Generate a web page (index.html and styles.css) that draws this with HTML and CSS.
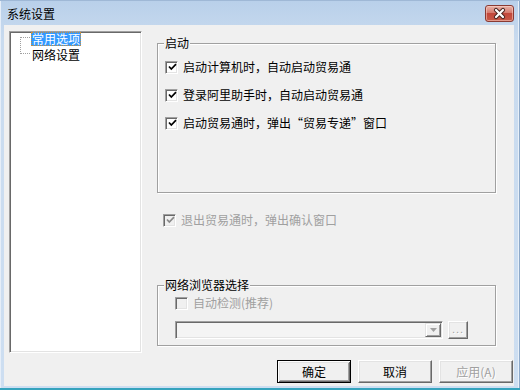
FILE: index.html
```html
<!DOCTYPE html>
<html lang="zh-CN">
<head>
<meta charset="utf-8">
<title>系统设置</title>
<link rel="stylesheet" href="styles.css">
</head>
<body>
<div class="window">
  <div class="titlebar">
    <span class="title">系统设置</span>
    <span class="close">
      <svg width="29" height="17" viewBox="0 0 29 17">
        <path d="M11 5 L18 12 M18 5 L11 12" stroke="#4a2420" stroke-width="4.2" stroke-linecap="round" fill="none"/>
        <path d="M11 5 L18 12 M18 5 L11 12" stroke="#ffffff" stroke-width="2.2" stroke-linecap="round" fill="none"/>
      </svg>
    </span>
  </div>
  <div class="client">
    <div class="main">
      <div class="tree">
        <div class="tree-body">
          <svg class="tree-lines" width="12" height="26" viewBox="0 0 12 26">
            <path d="M1.5 5 V22 M1.5 5.5 H12 M1.5 21.5 H12" stroke="#a0a0a0" stroke-width="1" stroke-dasharray="1 1" fill="none" shape-rendering="crispEdges"/>
          </svg>
          <div class="nodes">
            <span class="node selected">常用选项</span>
            <span class="node">网络设置</span>
          </div>
        </div>
      </div>
      <div class="panel">
        <div class="group group-start">
          <span class="group-label">启动</span>
          <div class="check-row"><span class="cb"><svg width="9" height="9" viewBox="0 0 9 9"><path d="M1 3.5 L3.3 6 L8 1.2" stroke="#000" stroke-width="1.7" fill="none"/></svg></span>启动计算机时，自动启动贸易通</div>
          <div class="check-row"><span class="cb"><svg width="9" height="9" viewBox="0 0 9 9"><path d="M1 3.5 L3.3 6 L8 1.2" stroke="#000" stroke-width="1.7" fill="none"/></svg></span>登录阿里助手时，自动启动贸易通</div>
          <div class="check-row"><span class="cb"><svg width="9" height="9" viewBox="0 0 9 9"><path d="M1 3.5 L3.3 6 L8 1.2" stroke="#000" stroke-width="1.7" fill="none"/></svg></span>启动贸易通时，弹出“贸易专递”窗口</div>
        </div>
        <div class="check-row disabled exit-row"><span class="cb"><svg width="9" height="9" viewBox="0 0 9 9"><path d="M1 3.5 L3.3 6 L8 1.2" stroke="#8a8a8a" stroke-width="1.7" fill="none"/></svg></span>退出贸易通时，弹出确认窗口</div>
        <div class="group group-browser">
          <span class="group-label">网络浏览器选择</span>
          <div class="check-row disabled"><span class="cb"></span>自动检测(推荐)</div>
          <div class="combo-row">
            <div class="combo">
              <span class="combo-value"></span>
              <span class="combo-arrow"><svg width="7" height="4" viewBox="0 0 7 4"><path d="M0 0 H7 L3.5 4 Z" fill="#a0a0a0"/></svg></span>
            </div>
            <span class="browse">...</span>
          </div>
        </div>
      </div>
    </div>
    <div class="buttons">
      <button class="btn default">确定</button>
      <button class="btn">取消</button>
      <button class="btn" disabled>应用(A)</button>
    </div>
  </div>
</div>
</body>
</html>
```
FILE: styles.css
```css
html, body {
  margin: 0;
  padding: 0;
  background: #ffffff;
}

body {
  font-family: "Noto Sans CJK SC", "Noto Sans", sans-serif;
  font-size: 12px;
  color: #000;
}

.window {
  width: 520px;
  height: 390px;
  box-sizing: border-box;
  display: flex;
  flex-direction: column;
  padding: 0 6px 2px 4px;
  background: linear-gradient(#b9d0ea, #c9dbef 40px, #cddef1);
  border-bottom: 2px solid #35a3bd;
  border-top: 1px solid #9fb8d6;
  box-shadow: inset 1px 0 0 #e6eef8, inset -1px 0 0 #8da9c9, inset -2px 0 0 #e8f0f9;
}

.titlebar {
  height: 24px;
  display: flex;
  align-items: flex-start;
  flex: none;
}

.title {
  margin: 6px 0 0 3px;
  line-height: 14px;
  color: #000;
}

.close {
  margin: 4px 0 0 auto;
  width: 29px;
  height: 17px;
  box-sizing: border-box;
  border: 1px solid #8a3a33;
  border-radius: 3px;
  background: linear-gradient(#e8b3a8, #d67a6e 45%, #c2473b 50%, #c85a48 100%);
  box-shadow: inset 0 0 0 1px rgba(255, 220, 210, 0.5);
  display: flex;
  align-items: center;
  justify-content: center;
}

.close svg {
  display: block;
  margin: -1px;
}

.client {
  flex: 1;
  background: #f0f0f0;
  display: flex;
  flex-direction: column;
}

.main {
  display: flex;
  padding: 6px 0 0 5px;
}

.tree {
  width: 133px;
  height: 322px;
  box-sizing: border-box;
  background: #fff;
  border: 1px solid;
  border-color: #a0a0a0 #fff #fff #a0a0a0;
  box-shadow: inset 1px 1px 0 #696969, inset -1px -1px 0 #e3e3e3;
  padding: 0 0 0 1px;
}

.tree-body {
  display: flex;
}

.tree-lines {
  display: block;
  margin: 0 0 0 8px;
  flex: none;
}

.nodes {
  display: flex;
  flex-direction: column;
  align-items: flex-start;
  gap: 2px;
}

.node {
  line-height: 14px;
  padding: 0 1px;
}

.node.selected {
  background: #3399ff;
  color: #fff;
  outline: 1px dotted #c8903c;
  outline-offset: -1px;
}

.panel {
  margin-left: 15px;
  width: 339px;
  display: flex;
  flex-direction: column;
}

.group {
  position: relative;
  box-sizing: border-box;
  border: 1px solid #a0a0a0;
  box-shadow: inset 1px 1px 0 #fff, 1px 1px 0 #fff;
  display: flex;
  flex-direction: column;
}

.group-label {
  position: absolute;
  top: -8px;
  left: 6px;
  padding: 0 1px;
  line-height: 14px;
  background: #f0f0f0;
}

.group-start {
  margin-top: 12px;
  height: 150px;
  padding: 16px 0 0 7px;
  gap: 14px;
}

.check-row {
  display: flex;
  align-items: center;
  height: 14px;
  line-height: 14px;
  white-space: nowrap;
}

.cb {
  width: 13px;
  height: 13px;
  box-sizing: border-box;
  flex: none;
  margin-right: 5px;
  background: #fff;
  border: 1px solid;
  border-color: #a0a0a0 #fff #fff #a0a0a0;
  box-shadow: inset 1px 1px 0 #696969, inset -1px -1px 0 #e3e3e3;
  display: flex;
  align-items: center;
  justify-content: center;
}

.cb svg {
  display: block;
  margin: 1px 0 0 1px;
}

.check-row.disabled {
  color: #a0a0a0;
}

.check-row.disabled .cb {
  background: #f0f0f0;
}

.exit-row {
  margin-top: 20px;
  padding-left: 6px;
}

.group-browser {
  margin-top: 58px;
  height: 61px;
  padding: 10px 0 0 17px;
}

.combo-row {
  display: flex;
  margin-top: 11px;
}

.combo {
  width: 268px;
  height: 18px;
  box-sizing: border-box;
  background: #f4f4f4;
  border: 1px solid;
  border-color: #a0a0a0 #fff #fff #a0a0a0;
  box-shadow: inset 1px 1px 0 #696969, inset -1px -1px 0 #e3e3e3;
  padding: 1px;
  display: flex;
}

.combo-value {
  flex: 1;
}

.combo-arrow {
  width: 16px;
  height: 14px;
  box-sizing: border-box;
  background: #f0f0f0;
  border: 1px solid;
  border-color: #e3e3e3 #696969 #696969 #e3e3e3;
  box-shadow: inset 1px 1px 0 #fff, inset -1px -1px 0 #a0a0a0;
  display: flex;
  align-items: center;
  justify-content: center;
}

.combo-arrow svg {
  display: block;
}

.browse {
  margin-left: 5px;
  width: 20px;
  height: 18px;
  box-sizing: border-box;
  background: #f0f0f0;
  border: 1px solid;
  border-color: #fff #696969 #696969 #fff;
  box-shadow: inset -1px -1px 0 #a0a0a0, inset 1px 1px 0 #e3e3e3;
  color: #a0a0a0;
  text-shadow: 1px 1px 0 #fff;
  font-family: "Liberation Sans", sans-serif;
  font-size: 11px;
  line-height: 14px;
  text-align: center;
  letter-spacing: 1px;
}

.buttons {
  display: flex;
  justify-content: flex-end;
  gap: 7px;
  margin-top: 7px;
  padding-right: 1px;
}

.btn {
  width: 74px;
  height: 23px;
  box-sizing: border-box;
  padding: 0;
  margin: 0;
  font-family: "Noto Sans CJK SC", "Noto Sans", sans-serif;
  font-size: 12px;
  line-height: 14px;
  color: #000;
  background: #f0f0f0;
  border: 1px solid;
  border-color: #fff #696969 #696969 #fff;
  box-shadow: inset -1px -1px 0 #a0a0a0, inset 1px 1px 0 #e3e3e3;
  border-radius: 0;
}

.btn.default {
  border-color: #000;
  box-shadow: inset 1px 1px 0 #fff, inset -1px -1px 0 #696969, inset 2px 2px 0 #e3e3e3, inset -2px -2px 0 #a0a0a0;
}

.btn:disabled {
  color: #a0a0a0;
  text-shadow: 1px 1px 0 #fff;
}
```
